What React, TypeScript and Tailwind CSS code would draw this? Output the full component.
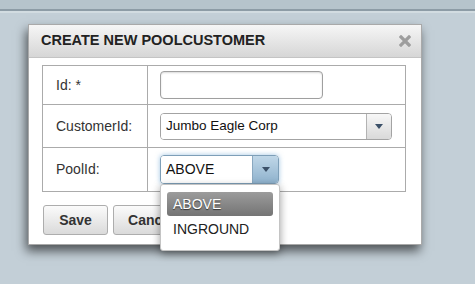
import React from 'react';

const Arrow = () => (
  <svg width="8" height="5" viewBox="0 0 8 5">
    <path d="M0 0 H8 L4 5 Z" fill="#3b5068" />
  </svg>
);

export default function App() {
  return (
    <div className="w-[475px] h-[284px] overflow-hidden bg-[#c3cfd7] font-['Liberation_Sans',Arial,sans-serif] text-[#333]">
      {/* top strip */}
      <div className="h-[9px] bg-[#b6c4cc]" />
      <div className="h-[2px] bg-[#8d9ca6]" />
      <div className="h-[2px] bg-[#d2dce1]" />

      {/* dialog */}
      <div className="mt-[11px] ml-[28px] w-[394px] h-[221px] bg-white border border-[#a9a9a9] shadow-[-2px_6px_10px_rgba(0,0,0,0.6)]">
        <div className="h-[33px] flex items-center justify-between pl-[12px] pr-[10px] bg-gradient-to-b from-[#f6f6f6] to-[#d6d6d6] border-b border-[#c4c4c4]">
          <span className="text-[14.5px] font-bold text-[#222]">CREATE NEW POOLCUSTOMER</span>
          <svg width="12" height="12" viewBox="0 0 12 12">
            <path d="M2 2 L10 10 M10 2 L2 10" stroke="#9d9d9d" strokeWidth="3.2" strokeLinecap="square" />
          </svg>
        </div>

        <div className="pl-[13px] pt-[7px]">
          <table className="w-[364px] border-collapse text-[14px]">
            <tbody>
              <tr className="h-[39px]">
                <td className="w-[105px] border border-[#ababab] pl-[13px]">Id: *</td>
                <td className="border border-[#ababab] pl-[12px]">
                  <div className="w-[163px] h-[28px] rounded-[4px] border border-[#9f9f9f] bg-white shadow-[inset_0_1px_2px_rgba(0,0,0,0.15)]" />
                </td>
              </tr>
              <tr className="h-[43px]">
                <td className="border border-[#ababab] pl-[13px]">CustomerId:</td>
                <td className="border border-[#ababab] pl-[12px]">
                  <div className="w-[232px] h-[27px] flex rounded-[4px] border border-[#a3a3a3] overflow-hidden">
                    <div className="flex-1 flex items-center pl-[5px] bg-white text-[13.5px] text-[#111]">Jumbo Eagle Corp</div>
                    <div className="w-[25px] flex items-center justify-center border-l border-[#b3b3b3] bg-gradient-to-b from-[#f7f7f7] to-[#d9d9d9]">
                      <Arrow />
                    </div>
                  </div>
                </td>
              </tr>
              <tr className="h-[44px]">
                <td className="border border-[#ababab] pl-[13px]">PoolId:</td>
                <td className="border border-[#ababab] pl-[12px]">
                  <div className="relative w-[119px]">
                    <div className="h-[29px] flex rounded-[4px] border border-[#7e9fb8] overflow-hidden shadow-[0_0_5px_rgba(100,160,210,0.6)]">
                      <div className="flex-1 flex items-center pl-[5px] bg-white text-[14px] text-[#111]">ABOVE</div>
                      <div className="w-[26px] flex items-center justify-center border-l border-[#8aa8c0] bg-gradient-to-b from-[#c0d7e8] to-[#8fb2cd]">
                        <Arrow />
                      </div>
                    </div>
                    {/* open dropdown */}
                    <div className="absolute left-0 top-full w-[120px] h-[67px] z-10 bg-white border border-[#c4c4c4] rounded-[3px] shadow-[0_3px_8px_rgba(0,0,0,0.4)] px-[6px] pt-[7px] text-[14px]">
                      <div className="h-[24px] flex items-center pl-[6px] rounded-[3px] bg-gradient-to-b from-[#9c9c9c] to-[#747474] text-white [text-shadow:0_1px_1px_rgba(0,0,0,0.6)]">ABOVE</div>
                      <div className="h-[26px] flex items-center pl-[6px] text-[#222]">INGROUND</div>
                    </div>
                  </div>
                </td>
              </tr>
            </tbody>
          </table>

          <div className="mt-[13px] ml-[1px] flex gap-[5px]">
            <button className="w-[65px] h-[30px] rounded-[3px] border border-[#adadad] bg-gradient-to-b from-[#fbfbfb] to-[#dadada] text-[14px] font-bold text-[#333]">Save</button>
            <button className="w-[76px] h-[30px] rounded-[3px] border border-[#adadad] bg-gradient-to-b from-[#fbfbfb] to-[#dadada] text-[14px] font-bold text-[#333]">Cancel</button>
          </div>
        </div>
      </div>
    </div>
  );
}
